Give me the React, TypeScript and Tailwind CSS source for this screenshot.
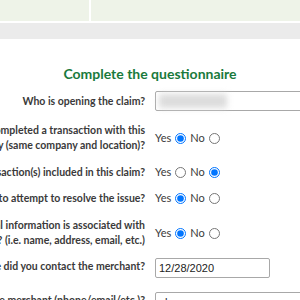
import React from 'react'

const label = 'text-[10.5px] leading-[15px] font-bold text-[#3a3a3a] whitespace-nowrap text-right shrink-0'

function Row({ lines, children, className = '' }: { lines: string[]; children: React.ReactNode; className?: string }) {
  return (
    <div className={`flex items-center ${className}`}>
      <div className="w-[145px] shrink-0 flex justify-end">
        <div className={label}>
          {lines.map((l, i) => (
            <div key={i}>{l}</div>
          ))}
        </div>
      </div>
      <div className="ml-[10px] flex-1 min-w-0">{children}</div>
    </div>
  )
}

function YesNo({ name, yes }: { name: string; yes: boolean }) {
  return (
    <div className="flex items-center h-[15px] text-[11px] text-[#3a3a3a] font-['Lato',sans-serif]">
      <span>Yes</span>
      <input type="radio" name={name} defaultChecked={yes} className="w-[11px] h-[11px] m-0 ml-[4px] mr-[4px]" />
      <span>No</span>
      <input type="radio" name={name} defaultChecked={!yes} className="w-[11px] h-[11px] m-0 ml-[4px]" />
    </div>
  )
}

export default function App() {
  return (
    <div className="w-[300px] h-[300px] overflow-hidden bg-white font-['Lato',sans-serif]">
      {/* header strip */}
      <div className="flex h-[21px] gap-[2px]">
        <div className="w-[89px] bg-[#eef3e8]" />
        <div className="flex-1 bg-[#eef3e8]" />
      </div>
      <div className="h-[16px] mt-[2px] bg-[#ebebeb]" />

      <h2 className="mt-[25px] text-center text-[14px] leading-[20px] font-bold text-[#1a7a3c]">
        Complete the questionnaire
      </h2>

      <div className="flex flex-col mt-[7px]">
        <Row lines={['Who is opening the claim?']}>
          <div className="h-[20px] w-[200px] border border-[#a8a8a8] rounded-[2px] bg-white flex items-center pl-[3px]">
            <div className="h-[14px] w-[68px] bg-[#dcdcdc] blur-[3px]" />
          </div>
        </Row>

        <Row className="mt-[12px]" lines={['Have you completed a transaction with this', 'merchant previously (same company and location)?']}>
          <YesNo name="q1" yes={true} />
        </Row>

        <Row className="mt-[12px]" lines={['Are multiple transaction(s) included in this claim?']}>
          <YesNo name="q2" yes={false} />
        </Row>

        <Row className="mt-[11px]" lines={['Did you contact the merchant to attempt to resolve the issue?']}>
          <YesNo name="q3" yes={true} />
        </Row>

        <Row className="mt-[12px]" lines={['Do you know what personal information is associated with', 'your account at the merchant? (i.e. name, address, email, etc.)']}>
          <YesNo name="q4" yes={true} />
        </Row>

        <Row className="mt-[6px]" lines={['On what date did you contact the merchant?']}>
          <input
            type="text"
            defaultValue="12/28/2020"
            className="h-[20px] w-[115px] border border-[#a8a8a8] rounded-[2px] px-[3px] text-[11px] text-[#222] font-['Liberation_Sans',Arial,sans-serif] outline-none"
          />
        </Row>

        <Row className="mt-[10px]" lines={['How did you contact the merchant (phone/email/etc.)?']}>
          <input
            type="text"
            defaultValue="phone"
            className="h-[20px] w-[200px] border border-[#a8a8a8] rounded-[2px] px-[3px] text-[11px] text-[#222] font-['Liberation_Sans',Arial,sans-serif] outline-none"
          />
        </Row>
      </div>
    </div>
  )
}
